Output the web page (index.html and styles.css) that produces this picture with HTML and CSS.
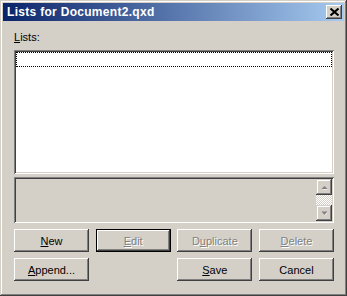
FILE: index.html
```html
<!DOCTYPE html>
<html lang="en">
<head>
  <meta charset="UTF-8" />
  <title>Lists for Document2.qxd</title>
  <link rel="stylesheet" href="styles.css">
</head>
<body>
  <div class="window">
    <div class="titlebar">
      <span class="title">Lists for Document2.qxd</span>
      <button class="close-btn">
        <svg width="9" height="8" viewBox="0 0 9 8"><path d="M0.5 0.5l8 7M8.5 0.5l-8 7" stroke="#000" stroke-width="2"/></svg>
      </button>
    </div>

    <div class="content">
      <label class="label"><u>L</u>ists:</label>
      <div class="listbox">
        <div class="list-row focus"></div>
      </div>

      <div class="notes">
        <div class="notes-text"></div>
        <div class="scrollbar">
          <div class="sb-btn">
            <svg width="7" height="5" viewBox="0 0 7 5"><path d="M4 2L1.5 4.5h5z" fill="#fff"/><path d="M3.5 1L0.5 4h6z" fill="#808080"/></svg>
          </div>
          <div class="sb-track"></div>
          <div class="sb-btn">
            <svg width="7" height="5" viewBox="0 0 7 5"><path d="M1.5 1.5h5L4 4.5z" fill="#fff"/><path d="M0.5 0.5h6L3.5 4z" fill="#808080"/></svg>
          </div>
        </div>
      </div>

      <div class="buttons">
        <button class="btn"><u>N</u>ew</button>
        <button class="btn default" disabled><u>E</u>dit</button>
        <button class="btn" disabled>D<u>u</u>plicate</button>
        <button class="btn" disabled><u>D</u>elete</button>
        <button class="btn"><u>A</u>ppend...</button>
        <span></span>
        <button class="btn"><u>S</u>ave</button>
        <button class="btn">Cancel</button>
      </div>
    </div>
  </div>
</body>
</html>
```

FILE: styles.css
```css
body {
  margin: 0;
  background: #d4d0c8;
  font-family: "Liberation Sans", Arial, sans-serif;
  font-size: 11px;
}

.window {
  width: 347px;
  height: 296px;
  box-sizing: border-box;
  padding: 3px;
  background: #d4d0c8;
  box-shadow: inset -1px -1px #404040, inset 1px 1px #d4d0c8,
              inset -2px -2px #808080, inset 2px 2px #fff;
}

.titlebar {
  height: 18px;
  display: flex;
  align-items: center;
  justify-content: space-between;
  padding: 0 2px 0 4px;
  background: linear-gradient(to right, #0a246a, #a6caf0);
}

.title {
  color: #fff;
  font-weight: bold;
  font-size: 12px;
  letter-spacing: 0.3px;
}

.close-btn {
  width: 16px;
  height: 14px;
  padding: 0;
  border: none;
  display: flex;
  align-items: center;
  justify-content: center;
  background: #d4d0c8;
  box-shadow: inset -1px -1px #404040, inset 1px 1px #fff,
              inset -2px -2px #808080, inset 2px 2px #d4d0c8;
}

.content {
  padding: 10px 10px 0 11px;
}

.label {
  display: block;
  height: 19px;
  line-height: 12px;
  color: #000;
}

.listbox {
  width: 320px;
  height: 124px;
  box-sizing: border-box;
  padding: 2px;
  background: #fff;
  box-shadow: inset 1px 1px #808080, inset -1px -1px #fff,
              inset 2px 2px #404040, inset -2px -2px #d4d0c8;
}

.list-row {
  height: 15px;
}

.list-row.focus {
  border: 1px dotted #000;
  box-sizing: border-box;
}

.notes {
  margin-top: 3px;
  width: 320px;
  height: 46px;
  box-sizing: border-box;
  padding: 2px;
  display: flex;
  background: #d4d0c8;
  box-shadow: inset 1px 1px #808080, inset -1px -1px #fff,
              inset 2px 2px #404040, inset -2px -2px #d4d0c8;
}

.notes-text {
  flex: 1;
}

.scrollbar {
  width: 16px;
  display: flex;
  flex-direction: column;
}

.sb-btn {
  height: 16px;
  display: flex;
  align-items: center;
  justify-content: center;
  background: #d4d0c8;
  box-shadow: inset -1px -1px #404040, inset 1px 1px #d4d0c8,
              inset -2px -2px #808080, inset 2px 2px #fff;
}

.sb-track {
  flex: 1;
  background: repeating-conic-gradient(#fff 0 25%, #d4d0c8 0 50%) 0 0 / 2px 2px;
}

.buttons {
  margin-top: 6px;
  width: 320px;
  display: grid;
  grid-template-columns: 75px 75px 75px 75px;
  justify-content: space-between;
  row-gap: 6px;
}

.btn {
  height: 23px;
  padding: 0;
  border: none;
  font-family: "Liberation Sans", Arial, sans-serif;
  font-size: 11px;
  color: #000;
  background: #d4d0c8;
  box-shadow: inset -1px -1px #404040, inset 1px 1px #fff,
              inset -2px -2px #808080, inset 2px 2px #d4d0c8;
}

.btn:disabled {
  color: #808080;
  text-shadow: 1px 1px #fff;
}

.btn.default {
  box-shadow: inset 0 0 0 1px #000, inset -2px -2px #404040, inset 2px 2px #fff,
              inset -3px -3px #808080;
}
```
